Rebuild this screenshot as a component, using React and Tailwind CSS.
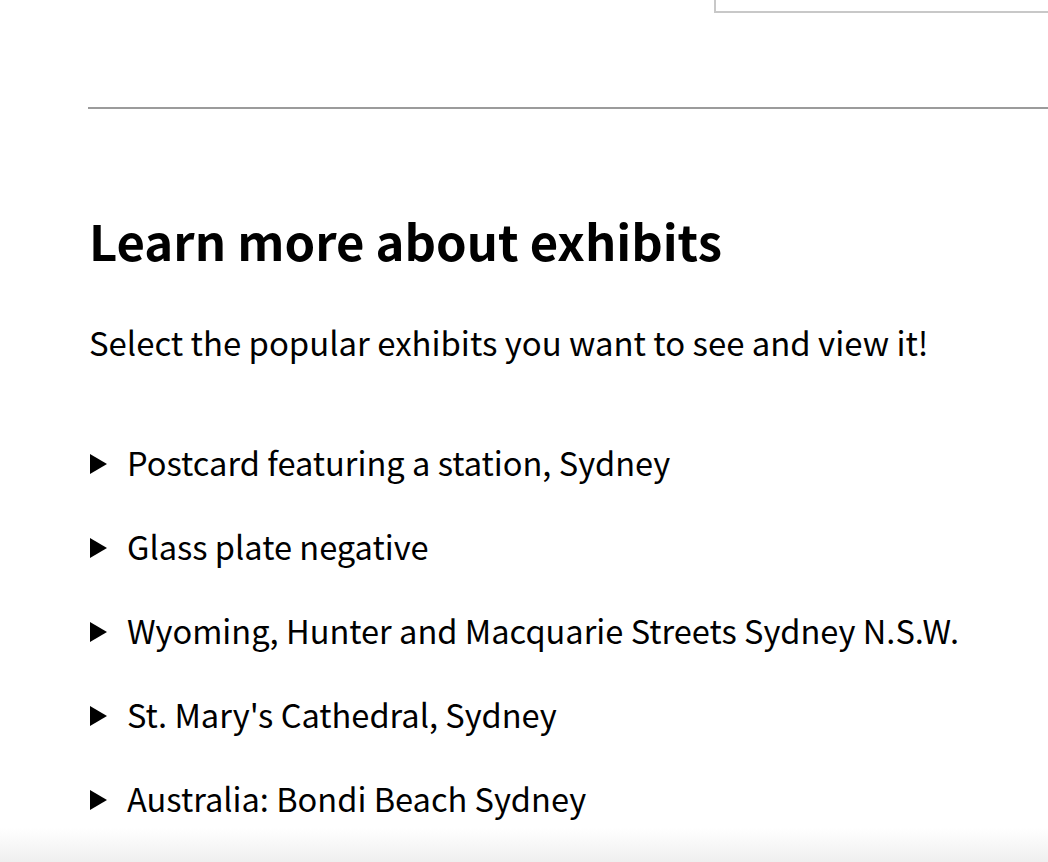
const exhibits = [
  "Postcard featuring a station, Sydney",
  "Glass plate negative",
  "Wyoming, Hunter and Macquarie Streets Sydney N.S.W.",
  "St. Mary's Cathedral, Sydney",
  "Australia: Bondi Beach Sydney",
];

function Arrow() {
  return (
    <svg width="17" height="20" viewBox="0 0 17 20" className="mt-[4px] shrink-0">
      <polygon points="0,0 17,10 0,20" fill="#000" />
    </svg>
  );
}

export default function App() {
  return (
    <div
      className="relative min-h-screen overflow-hidden bg-white text-black"
      style={{ fontFamily: '"Noto Sans CJK KR", "Noto Sans", sans-serif' }}
    >
      {/* search box corner */}
      <div className="flex h-[13px] justify-end">
        <div className="w-[334px] border-b-2 border-l-2 border-[#c8c8c8]" />
      </div>

      <main className="pl-[88px]">
        <hr className="mt-[94px] border-t-2 border-[#9b9b9b]" />

        <h2 className="mt-[101px] pl-[1px] text-[49px] font-bold leading-[60px]">
          Learn more about exhibits
        </h2>

        <p className="mt-[52px] pl-[1px] text-[32.9px] leading-[40px]">
          Select the popular exhibits you want to see and view it!
        </p>

        <ul className="mt-[80px] flex flex-col gap-[44px] pl-[2px]">
          {exhibits.map((item) => (
            <li key={item} className="flex items-center gap-[20px] text-[32.6px] leading-[40px]">
              <Arrow />
              <span>{item}</span>
            </li>
          ))}
        </ul>
      </main>

      <div className="pointer-events-none fixed inset-x-0 bottom-0 h-[34px] bg-gradient-to-b from-white to-[#efefef]" />
    </div>
  );
}
